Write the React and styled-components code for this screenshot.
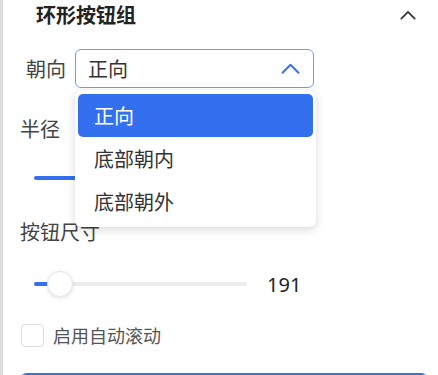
import styled, { createGlobalStyle } from "styled-components";

const GlobalStyle = createGlobalStyle`
  body {
    margin: 0;
    background: #fff;
    font-family: "Noto Sans CJK SC", "Noto Sans", sans-serif;
  }
`;

const Panel = styled.div`
  width: 438px;
  height: 375px;
  box-sizing: border-box;
  border-left: 3px solid #dddddf;
  overflow: hidden;
  padding: 0 10px 0 17px;
`;

const Header = styled.div`
  height: 30px;
  display: flex;
  align-items: center;
  justify-content: space-between;
  padding-left: 16px;
  padding-right: 12px;
`;

const Title = styled.h3`
  margin: 0;
  font-size: 20px;
  font-weight: 700;
  color: #222;
  line-height: 30px;
`;

const FieldRow = styled.div`
  margin-top: 19px;
  display: flex;
  align-items: center;
  gap: 9px;
  padding-left: 6px;
`;

const Label = styled.div`
  font-size: 20px;
  line-height: 24px;
  color: #444;
  margin-top: ${(p) => p.$top || 0}px;
`;

const SelectWrap = styled.div`
  position: relative;
`;

const SelectBox = styled.div`
  width: 239px;
  height: 39px;
  box-sizing: border-box;
  border: 1.5px solid #6d9cf4;
  border-radius: 6px;
  display: flex;
  align-items: center;
  justify-content: space-between;
  padding: 0 13px 0 12px;
  font-size: 20px;
  color: #333;
`;

const Menu = styled.div`
  position: absolute;
  top: 41px;
  left: 0;
  width: 241px;
  box-sizing: border-box;
  padding: 4px 3px;
  background: #fff;
  border-radius: 6px;
  box-shadow: 0 3px 10px rgba(0, 0, 0, 0.14), 0 0 1px rgba(0, 0, 0, 0.12);
  z-index: 10;
`;

const Option = styled.div`
  height: 43px;
  display: flex;
  align-items: center;
  padding-left: 16px;
  border-radius: 5px;
  font-size: 20px;
  color: ${(p) => (p.$active ? "#fff" : "#333")};
  background: ${(p) => (p.$active ? "#3370f0" : "transparent")};
`;

const SliderRow = styled.div`
  margin-top: ${(p) => p.$top}px;
  height: 28px;
  display: flex;
  align-items: center;
  gap: 20px;
  padding-left: 14px;
`;

const Track = styled.div`
  position: relative;
  width: 213px;
  height: 4px;
  border-radius: 2px;
  background: #ececec;
`;

const Fill = styled.div`
  height: 100%;
  border-radius: 2px;
  background: #3370f0;
`;

const Thumb = styled.div`
  position: absolute;
  top: 50%;
  width: 26px;
  height: 26px;
  box-sizing: border-box;
  border-radius: 50%;
  background: #fff;
  border: 1px solid #e6e6e6;
  box-shadow: 0 1px 4px rgba(0, 0, 0, 0.12);
  transform: translate(-50%, -50%);
`;

const Value = styled.span`
  font-size: 20px;
  color: #222;
  font-family: "Noto Sans", sans-serif;
`;

const CheckRow = styled.label`
  margin-top: 24px;
  display: flex;
  align-items: center;
  gap: 9px;
  padding-left: 1px;
  font-size: 18px;
  color: #555;
`;

const Box = styled.span`
  width: 23px;
  height: 23px;
  box-sizing: border-box;
  border: 1.5px solid #dcdcdc;
  border-radius: 4px;
`;

const Button = styled.button`
  margin-top: 25px;
  width: 408px;
  height: 40px;
  border: none;
  border-radius: 7px;
  background: #3370f0;
`;

const Chevron = ({ color, w, h }) => (
  <svg width={w} height={h} viewBox="0 0 18 10" fill="none">
    <path d="M1.5 9L9 1.5L16.5 9" stroke={color} strokeWidth="2" strokeLinecap="round" strokeLinejoin="round" />
  </svg>
);

const Slider = ({ top, pct, value }) => (
  <SliderRow $top={top}>
    <Track>
      <Fill style={{ width: `${pct}%` }} />
      <Thumb style={{ left: `${pct}%` }} />
    </Track>
    <Value>{value}</Value>
  </SliderRow>
);

export default function App() {
  return (
    <>
      <GlobalStyle />
      <Panel>
        <Header>
          <Title>环形按钮组</Title>
          <Chevron color="#333" w={16} h={10} />
        </Header>
        <FieldRow>
          <Label>朝向</Label>
          <SelectWrap>
            <SelectBox>
              <span>正向</span>
              <Chevron color="#3a74f0" w={19} h={11} />
            </SelectBox>
            <Menu>
              <Option $active>正向</Option>
              <Option>底部朝内</Option>
              <Option>底部朝外</Option>
            </Menu>
          </SelectWrap>
        </FieldRow>
        <Label $top={29}>半径</Label>
        <Slider top={23} pct={60} value={120} />
        <Label $top={28}>按钮尺寸</Label>
        <Slider top={26} pct={12} value={191} />
        <CheckRow>
          <Box />
          启用自动滚动
        </CheckRow>
        <Button />
      </Panel>
    </>
  );
}
